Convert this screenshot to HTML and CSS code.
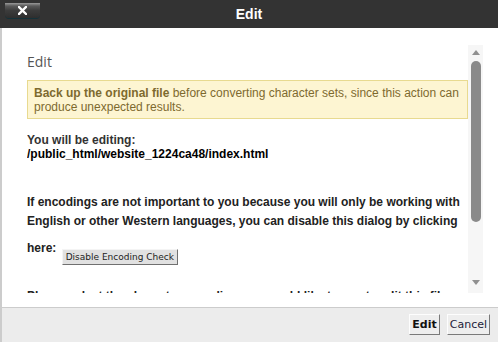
FILE: index.html
```html
<html lang="en">
<head>
    <meta charset="UTF-8">
    <meta name="viewport" content="width=device-width, initial-scale=1.0">
    <title>Edit</title>
    <link rel="stylesheet" href="styles.css">
</head>
<body>
    <div class="dialog">
        <div class="titlebar">
            <button class="close-btn" title="Close">
                <svg width="9" height="9" viewBox="0 0 9 9">
                    <path d="M1 1 L8 8 M8 1 L1 8" stroke="#fff" stroke-width="2.4" stroke-linecap="square"/>
                </svg>
            </button>
            <div class="title">Edit</div>
        </div>

        <div class="main">
            <div class="scroll-content">
                <h2 class="heading">Edit</h2>
                <div class="warning">
                    <b>Back up the original file</b> before converting character sets, since this action can produce unexpected results.
                </div>
                <div class="editing">
                    <div class="label">You will be editing:</div>
                    <div class="path">/public_html/website_1224ca48/index.html</div>
                </div>
                <p class="note">If encodings are not important to you because you will only be working with English or other Western languages, you can disable this dialog by clicking</p>
                <p class="here">here: <button class="small-btn">Disable Encoding Check</button></p>
                <p class="note more">Please select the character encoding you would like to use to edit this file:</p>
            </div>
            <div class="scrollbar">
                <div class="arrow-up"></div>
                <div class="thumb"></div>
                <div class="spacer"></div>
                <div class="arrow-down"></div>
            </div>
        </div>

        <div class="footer">
            <button class="btn btn-primary">Edit</button>
            <button class="btn">Cancel</button>
        </div>
    </div>
</body>
</html>
```

FILE: styles.css
```css
body {
    margin: 0;
    width: 498px;
    height: 342px;
    overflow: hidden;
    font-family: "Liberation Sans", Arial, sans-serif;
    background-color: #fff;
}
.dialog {
    display: flex;
    flex-direction: column;
    height: 342px;
}
.titlebar {
    height: 28px;
    background-color: #333;
    display: grid;
    grid-template-columns: 1fr auto 1fr;
    align-items: start;
}
.close-btn {
    margin: 3px 0 0 5px;
    width: 35px;
    height: 15px;
    padding: 0;
    border: none;
    border-radius: 0 0 4px 4px;
    background: linear-gradient(#9a9a9a 0, #5a5a5a 3px, #3c3c3c 50%, #2e2e2e 100%);
    box-shadow: 0 1px 0 #15323a;
    display: flex;
    align-items: center;
    justify-content: center;
}
.title {
    color: #fff;
    font-size: 14px;
    font-weight: bold;
    line-height: 28px;
}
.main {
    flex: 1;
    display: flex;
    border-left: 2px solid #ccc;
    background-color: #fff;
    padding: 17px 15px 14px 25px;
    min-height: 0;
}
.scroll-content {
    flex: 1;
    overflow: hidden;
    color: #222;
    font-size: 12px;
}
.heading {
    margin: 0;
    padding-top: 7px;
    font-family: "Open Sans", sans-serif;
    font-size: 14px;
    font-weight: normal;
    line-height: 19px;
    color: #555;
}
.warning {
    margin-top: 9px;
    padding: 5px 6px 4px 6px;
    background-color: #fdf5d2;
    border: 1px solid #e8da90;
    color: #7d6a2f;
    line-height: 14px;
}
.editing {
    margin-top: 14px;
    font-weight: bold;
    line-height: 14px;
}
.editing .label {
    color: #333;
}
.editing .path {
    color: #000;
}
.note {
    margin: 32px 0 0 0;
    font-weight: bold;
    line-height: 19px;
}
.note.more {
    margin-top: 22px;
}
.here {
    margin: 8px 0 0 0;
    font-weight: bold;
    line-height: 19px;
}
.small-btn {
    vertical-align: top;
    margin: 10px 0 0 2px;
    height: 16px;
    padding: 0 3px;
    background-color: #e1e1e1;
    border: 1px solid;
    border-color: #f4f4f4 #707070 #707070 #f4f4f4;
    font-family: "DejaVu Sans", sans-serif;
    font-size: 9px;
    color: #222;
    line-height: 13px;
}
.scrollbar {
    width: 15px;
    background-color: #f6f6f6;
    display: flex;
    flex-direction: column;
    align-items: center;
    padding: 5px 0 8px 0;
}
.arrow-up {
    width: 0;
    height: 0;
    border-left: 4px solid transparent;
    border-right: 4px solid transparent;
    border-bottom: 5px solid #909090;
}
.thumb {
    margin-top: 6px;
    width: 10px;
    height: 161px;
    background-color: #8a8a8a;
    border-radius: 5px;
}
.spacer {
    flex: 1;
}
.arrow-down {
    width: 0;
    height: 0;
    border-left: 4px solid transparent;
    border-right: 4px solid transparent;
    border-top: 5px solid #909090;
}
.footer {
    height: 35px;
    box-sizing: border-box;
    border-top: 1px solid #ccc;
    border-left: 2px solid #ccc;
    background-color: #ececec;
    display: flex;
    justify-content: flex-end;
    align-items: flex-start;
    gap: 7px;
    padding: 6px 8px 0 0;
}
.btn {
    height: 21px;
    padding: 0 2px;
    background-color: #eeeeee;
    border: 1px solid;
    border-color: #fdfdfd #7a7a7a #7a7a7a #fdfdfd;
    font-family: "DejaVu Sans", sans-serif;
    font-size: 11px;
    color: #1d1d3a;
}
.btn-primary {
    font-weight: bold;
    color: #111;
}
```
